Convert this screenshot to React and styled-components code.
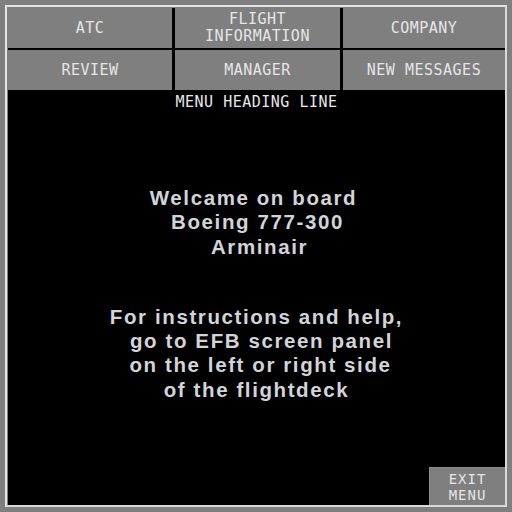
import styled, { createGlobalStyle } from "styled-components";

const GlobalStyle = createGlobalStyle`
  html, body {
    margin: 0;
    padding: 0;
    background: #7f7f7f;
  }
`;

const buttons = [
  ["ATC"],
  ["FLIGHT", "INFORMATION"],
  ["COMPANY"],
  ["REVIEW"],
  ["MANAGER"],
  ["NEW MESSAGES"],
];

const welcomeLines = [
  ["Welcame on board", -3],
  ["Boeing 777-300", 1],
  ["Arminair", 3],
];
const helpLines = [
  ["For instructions and help,", 0],
  ["go to EFB screen panel", 5],
  ["on the left or right side", 4],
  ["of the flightdeck", 0],
];

function App() {
  return (
    <>
      <GlobalStyle />
      <Frame>
        <Bezel>
          <MenuGrid>
            {buttons.map((lines, i) => (
              <MenuButton key={i}>
                {lines.map((l) => (
                  <span key={l}>{l}</span>
                ))}
              </MenuButton>
            ))}
          </MenuGrid>
          <Screen>
            <Heading>MENU HEADING LINE</Heading>
            <Message $top={72}>
              {welcomeLines.map(([l, s]) => (
                <Line key={l} $shift={s}>{l}</Line>
              ))}
            </Message>
            <Message $top={46}>
              {helpLines.map(([l, s]) => (
                <Line key={l} $shift={s}>{l}</Line>
              ))}
            </Message>
            <ExitButton>
              <span>EXIT</span>
              <span>MENU</span>
            </ExitButton>
          </Screen>
        </Bezel>
      </Frame>
    </>
  );
}

const Frame = styled.div`
  width: 512px;
  height: 512px;
  box-sizing: border-box;
  padding: 5px;
  background: #7f7f7f;
`;

const Bezel = styled.div`
  height: 100%;
  box-sizing: border-box;
  border-top: 2px solid #e4e4e4;
  border-left: 2px solid #e4e4e4;
  border-right: 2px solid #d8d8d8;
  border-bottom: 2px solid #d8d8d8;
  padding: 1px 0 0 1px;
  display: flex;
  flex-direction: column;
`;

const MenuGrid = styled.div`
  display: grid;
  grid-template-columns: 164px 165px 1fr;
  grid-template-rows: 40px 40px;
  column-gap: 3px;
  row-gap: 2px;
  background: #000;
`;

const MenuButton = styled.div`
  background: #7f7f7f;
  display: flex;
  flex-direction: column;
  align-items: center;
  justify-content: center;
  font-family: "DejaVu Sans Mono", "Liberation Mono", monospace;
  font-size: 15px;
  letter-spacing: 0.5px;
  line-height: 17px;
  color: #e6e6e6;
`;

const Screen = styled.div`
  flex: 1;
  background: #000;
  display: flex;
  flex-direction: column;
  align-items: center;
`;

const Heading = styled.div`
  font-family: "DejaVu Sans Mono", "Liberation Mono", monospace;
  font-size: 15px;
  letter-spacing: 0.5px;
  line-height: 24px;
  color: #e8e8e8;
`;

const Message = styled.div`
  margin-top: ${(p) => p.$top}px;
  font-family: "Liberation Sans", Arial, sans-serif;
  font-weight: bold;
  font-size: 20.5px;
  letter-spacing: 1.6px;
  line-height: 24.3px;
  text-align: center;
  color: #d2d4da;
`;

const Line = styled.div`
  position: relative;
  left: ${(p) => p.$shift}px;
`;

const ExitButton = styled.div`
  margin-top: auto;
  align-self: flex-end;
  width: 76px;
  height: 38px;
  box-sizing: border-box;
  background: #7f7f7f;
  border-top: 1px solid #8c8c8c;
  border-left: 1px solid #8c8c8c;
  display: flex;
  flex-direction: column;
  align-items: center;
  justify-content: center;
  font-family: "DejaVu Sans Mono", "Liberation Mono", monospace;
  font-size: 14px;
  letter-spacing: 1px;
  line-height: 16px;
  color: #e6e6e6;
`;

export default App;
